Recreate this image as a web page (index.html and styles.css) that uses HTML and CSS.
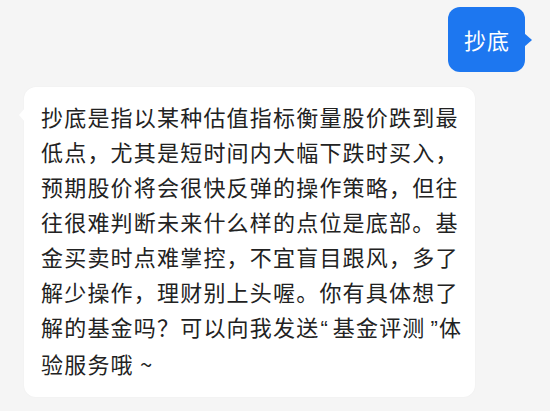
FILE: index.html
```html
<!DOCTYPE html>
<html lang="zh-CN">
<head>
<meta charset="utf-8">
<link rel="stylesheet" href="styles.css">
</head>
<body>
<div class="chat">
  <div class="row row-right">
    <div class="bubble bubble-user">抄底</div>
  </div>
  <div class="row row-left">
    <div class="bubble bubble-bot">抄底是指以某种估值指标衡量股价跌到最低点，尤其是短时间内大幅下跌时买入，预期股价将会很快反弹的操作策略，但往往很难判断未来什么样的点位是底部。基金买卖时点难掌控，不宜盲目跟风，多了解少操作，理财别上头喔。你有具体想了解的基金吗？可以向我发送<span class="q q-open">“</span>基金评测<span class="q q-close">”</span>体验服务哦 ~</div>
  </div>
</div>
</body>
</html>
```

FILE: styles.css
```css
html, body {
  margin: 0;
  padding: 0;
  background: #f5f5f5;
}
body {
  width: 550px;
  height: 411px;
  overflow: hidden;
  font-family: "Noto Sans CJK SC", "Noto Sans", sans-serif;
}
.chat {
  display: flex;
  flex-direction: column;
  gap: 15px;
  padding-top: 7px;
}
.row {
  display: flex;
}
.row-right {
  justify-content: flex-end;
  padding-right: 25px;
}
.row-left {
  justify-content: flex-start;
  padding-left: 24px;
}
.bubble {
  position: relative;
  border-radius: 12px;
}
.bubble-user {
  background: #1d77f0;
  color: #ffffff;
  font-size: 22px;
  line-height: 65px;
  height: 65px;
  padding: 0 15px 0 16px;
  letter-spacing: 1px;
}
.bubble-user::after {
  content: "";
  position: absolute;
  right: -7px;
  top: 26px;
  width: 0;
  height: 0;
  border-top: 7px solid transparent;
  border-bottom: 7px solid transparent;
  border-left: 8px solid #1d77f0;
}
.bubble-bot {
  background: #ffffff;
  color: #222222;
  font-size: 22px;
  line-height: 35px;
  letter-spacing: 1.2px;
  width: 426px;
  padding: 12px 8px 16px 17px;
  box-shadow: 0 0 2px rgba(0,0,0,0.04);
}
.bubble-bot::before {
  content: "";
  position: absolute;
  left: -5px;
  top: 21px;
  width: 0;
  height: 0;
  border-top: 7px solid transparent;
  border-bottom: 7px solid transparent;
  border-right: 6px solid #ffffff;
}
.q {
  font-family: "Liberation Sans", sans-serif;
  letter-spacing: 0;
}
.q-open {
  margin-left: 1px;
  margin-right: 5px;
}
.q-close {
  margin-left: 5px;
  margin-right: 1px;
}
```
